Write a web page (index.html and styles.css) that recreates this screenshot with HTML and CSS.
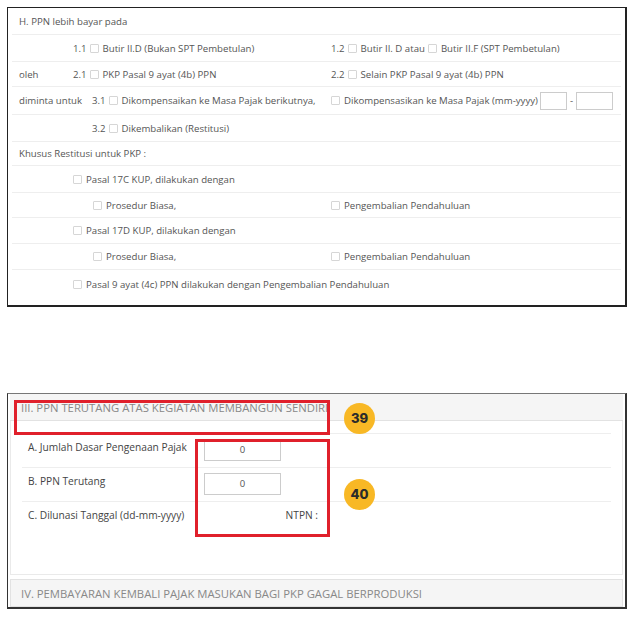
FILE: index.html
```html
<!DOCTYPE html>
<html>
<head>
<meta charset="utf-8">
<link rel="stylesheet" href="styles.css">
</head>
<body>
<div class="page">
  <div class="sec1">
    <div class="inner">
      <div class="row r27"><div class="cell">H. PPN lebih bayar pada</div></div>
      <div class="row r27">
        <div class="cell"><span class="lab"></span>1.1<span class="cb"></span>Butir II.D (Bukan SPT Pembetulan)</div>
        <div class="cell">1.2<span class="cb"></span>Butir II. D atau<span class="cb"></span>Butir II.F (SPT Pembetulan)</div>
      </div>
      <div class="row r25">
        <div class="cell"><span class="lab">oleh</span>2.1<span class="cb"></span>PKP Pasal 9 ayat (4b) PPN</div>
        <div class="cell">2.2<span class="cb"></span>Selain PKP Pasal 9 ayat (4b) PPN</div>
      </div>
      <div class="row r28">
        <div class="cell"><span class="lab wide">diminta untuk</span>3.1<span class="cb"></span>Dikompensaikan ke Masa Pajak berikutnya,</div>
        <div class="cell"><span class="cb first"></span>Dikompensasikan ke Masa Pajak (mm-yyyy)<span class="box b1"></span><span class="dash">-</span><span class="box b2"></span></div>
      </div>
      <div class="row r27">
        <div class="cell"><span class="lab wide"></span>3.2<span class="cb"></span>Dikembalikan (Restitusi)</div>
      </div>
      <div class="row r24"><div class="cell">Khusus Restitusi untuk PKP :</div></div>
      <div class="row r27"><div class="cell"><span class="lab"></span><span class="cb first"></span>Pasal 17C KUP, dilakukan dengan</div></div>
      <div class="row r25">
        <div class="cell"><span class="lab deep"></span><span class="cb first"></span>Prosedur Biasa,</div>
        <div class="cell"><span class="cb first"></span>Pengembalian Pendahuluan</div>
      </div>
      <div class="row r26"><div class="cell"><span class="lab"></span><span class="cb first"></span>Pasal 17D KUP, dilakukan dengan</div></div>
      <div class="row r26">
        <div class="cell"><span class="lab deep"></span><span class="cb first"></span>Prosedur Biasa,</div>
        <div class="cell"><span class="cb first"></span>Pengembalian Pendahuluan</div>
      </div>
      <div class="row last"><div class="cell wide-cell"><span class="lab"></span><span class="cb first"></span>Pasal 9 ayat (4c) PPN dilakukan dengan Pengembalian Pendahuluan</div></div>
    </div>
  </div>

  <div class="sec2">
    <div class="heading">III. PPN TERUTANG ATAS KEGIATAN MEMBANGUN SENDIRI</div>
    <div class="pbody">
      <div class="frow">
        <div class="flab">A. Jumlah Dasar Pengenaan Pajak</div>
        <div class="fval"><span class="num">0</span></div>
      </div>
      <div class="frow">
        <div class="flab">B. PPN Terutang</div>
        <div class="fval"><span class="num">0</span></div>
      </div>
      <div class="frow nob">
        <div class="flab">C. Dilunasi Tanggal (dd-mm-yyyy)</div>
        <div class="fval ntpn">NTPN :</div>
      </div>
    </div>
    <div class="heading h4">IV. PEMBAYARAN KEMBALI PAJAK MASUKAN BAGI PKP GAGAL BERPRODUKSI</div>
  </div>

  <div class="mark m1"></div>
  <div class="mark m2"></div>
  <div class="badge b39">39</div>
  <div class="badge b40">40</div>
</div>
</body>
</html>
```
FILE: styles.css
```css
html, body {
  margin: 0;
  padding: 0;
  background: #fff;
}
.page {
  position: relative;
  width: 634px;
  height: 620px;
  font-family: "Open Sans", "Noto Sans", sans-serif;
  font-size: 10px;
  color: #555;
}
.sec1 {
  margin: 7px 7px 0 7px;
  border: 1px solid #222;
  border-right-width: 2px;
  border-bottom-width: 2px;
  height: 300px;
  box-sizing: border-box;
  font-size: 9.65px;
}
.inner {
  margin: 0 4px;
}
.row {
  display: grid;
  grid-template-columns: 312px 1fr;
  align-items: center;
  padding-left: 7px;
  border-bottom: 1px solid #eee;
  box-sizing: border-box;
}
.row.r27 { height: 27px; }
.row.r28 { height: 28px; }
.row.r26 { height: 26px; }
.row.r25 { height: 25px; }
.row.r24 { height: 24px; }
.row.last { height: 28px; border-bottom: none; }
.cell {
  display: flex;
  align-items: center;
  white-space: nowrap;
}
.wide-cell { grid-column: 1 / span 2; }
.lab {
  display: inline-block;
  width: 54px;
  flex: none;
}
.lab.wide { width: 73px; }
.lab.deep { width: 74px; }
.cb {
  display: inline-block;
  width: 7px;
  height: 7px;
  border: 1px solid #d6d6d6;
  border-radius: 1px;
  background: #fff;
  margin: 0 4px 0 3px;
  flex: none;
}
.cb.first { margin-left: 0; }
.box {
  display: inline-block;
  height: 16px;
  border: 1px solid #ccc;
  background: #fff;
  flex: none;
}
.box.b1 { width: 25px; margin-left: 2px; }
.box.b2 { width: 35px; }
.dash { margin: 0 3px; }

.sec2 {
  margin: 86px 7px 0 7px;
  border: 1px solid #333;
  border-top-color: #777;
  border-right-width: 2px;
  border-bottom-width: 2px;
  height: 216px;
  box-sizing: border-box;
  padding: 0 2px;
}
.heading {
  height: 26px;
  line-height: 27px;
  background: #f5f5f5;
  border-bottom: 1px solid #e2e2e2;
  color: #888;
  font-size: 11.3px;
  padding-left: 11px;
  white-space: nowrap;
}
.heading.h4 {
  margin-top: 4px;
  border: 1px solid #e2e2e2;
  padding-left: 10px;
}
.pbody {
  height: 154px;
  border: 1px solid #eaeaea;
  border-top: none;
  padding: 12px 11px 0 11px;
  box-sizing: border-box;
}
.frow {
  display: flex;
  align-items: center;
  height: 34px;
  border-top: 1px solid #eee;
  box-sizing: border-box;
  color: #444;
  font-size: 10.2px;
}
.frow.nob { height: 30px; }
.flab {
  width: 176px;
  padding-left: 6px;
  flex: none;
  position: relative;
  top: -4px;
}
.frow.nob .flab { top: -2px; }
.fval {
  display: flex;
  align-items: center;
}
.num {
  display: inline-block;
  box-sizing: border-box;
  width: 77px;
  height: 22px;
  line-height: 20px;
  border: 1px solid #ccc;
  text-align: center;
  font-size: 9.5px;
  color: #555;
  position: relative;
  top: -1px;
}
.ntpn {
  width: 114px;
  justify-content: flex-end;
  position: relative;
  top: -2px;
}
.mark {
  position: absolute;
  border: 3px solid #e0202b;
  box-sizing: border-box;
}
.m1 { left: 14px; top: 393px; width: 316px; height: 35px; }
.m2 { left: 195px; top: 432px; width: 135px; height: 98px; }
.badge {
  position: absolute;
  width: 31px;
  height: 31px;
  border-radius: 50%;
  background: #f8b825;
  color: #2b2b2b;
  font-family: "Inter", "DejaVu Sans", sans-serif;
  font-weight: 800;
  font-size: 13px;
  line-height: 31px;
  text-align: center;
}
.b39 { left: 344px; top: 396px; }
.b40 { left: 344px; top: 472px; }
```
